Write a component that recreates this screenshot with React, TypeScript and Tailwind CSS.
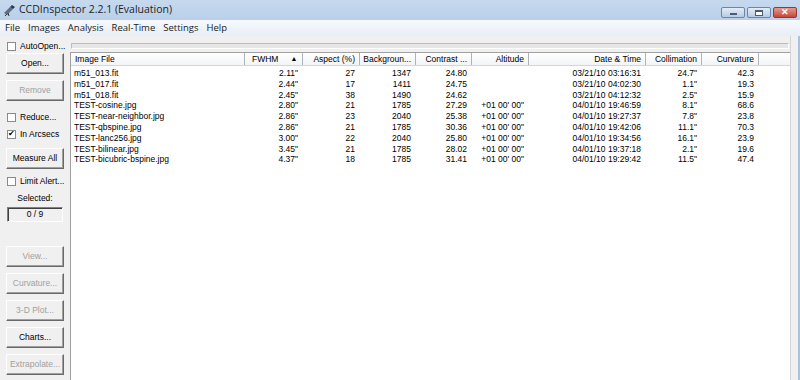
import React from 'react';

const rows = [
  ['m51_013.fit', '2.11"', '27', '1347', '24.80', '', '03/21/10 03:16:31', '24.7"', '42.3'],
  ['m51_017.fit', '2.44"', '17', '1411', '24.75', '', '03/21/10 04:02:30', '1.1"', '19.3'],
  ['m51_018.fit', '2.45"', '38', '1490', '24.62', '', '03/21/10 04:12:32', '2.5"', '15.9'],
  ['TEST-cosine.jpg', '2.80"', '21', '1785', '27.29', '+01 00\' 00"', '04/01/10 19:46:59', '8.1"', '68.6'],
  ['TEST-near-neighbor.jpg', '2.86"', '23', '2040', '25.38', '+01 00\' 00"', '04/01/10 19:27:37', '7.8"', '23.8'],
  ['TEST-qbspine.jpg', '2.86"', '21', '1785', '30.36', '+01 00\' 00"', '04/01/10 19:42:06', '11.1"', '70.3'],
  ['TEST-lanc256.jpg', '3.00"', '22', '2040', '25.80', '+01 00\' 00"', '04/01/10 19:34:56', '16.1"', '23.9'],
  ['TEST-bilinear.jpg', '3.45"', '21', '1785', '28.02', '+01 00\' 00"', '04/01/10 19:37:18', '2.1"', '19.6'],
  ['TEST-bicubric-bspine.jpg', '4.37"', '18', '1785', '31.41', '+01 00\' 00"', '04/01/10 19:29:42', '11.5"', '47.4'],
];

const cols = [
  { label: 'Image File', w: 'w-[174px]', align: 'left' },
  { label: 'FWHM', w: 'w-[58px]', align: 'right', sort: true },
  { label: 'Aspect (%)', w: 'w-[57px]', align: 'right' },
  { label: 'Backgroun...', w: 'w-[56px]', align: 'right' },
  { label: 'Contrast ...', w: 'w-[56px]', align: 'right' },
  { label: 'Altitude', w: 'w-[57px]', align: 'right' },
  { label: 'Date & Time', w: 'w-[117px]', align: 'right' },
  { label: 'Collimation', w: 'w-[56px]', align: 'right' },
  { label: 'Curvature', w: 'w-[57px]', align: 'right' },
];

function Btn({ label, disabled, className }: { label: string; disabled?: boolean; className?: string }) {
  return (
    <div
      className={`mx-[6px] h-[21px] shrink-0 flex items-center justify-center bg-[#f0f0f0] border border-t-white border-l-white border-r-[#696969] border-b-[#696969] shadow-[inset_-1px_-1px_0_#a0a0a0] text-[8.5px] ${
        disabled ? 'text-[#a0a0a0]' : 'text-black'
      } ${className ?? ''}`}
    >
      {label}
    </div>
  );
}

function Check({ label, checked, className }: { label: string; checked?: boolean; className?: string }) {
  return (
    <div className={`h-[10px] shrink-0 flex items-center gap-[4px] pl-[7px] text-[8.5px] leading-[10px] ${className ?? ''}`}>
      <div className="w-[9px] h-[9px] bg-white border border-[#8a8a8a] flex items-center justify-center text-[8px] leading-none">
        {checked ? '✔' : ''}
      </div>
      <span>{label}</span>
    </div>
  );
}

export default function App() {
  return (
    <div className="w-[800px] h-[380px] overflow-hidden flex flex-col bg-[#f0f0f0] text-black font-['Liberation_Sans',Arial,sans-serif]">
      {/* title bar */}
      <div className="h-[20px] shrink-0 flex items-center bg-gradient-to-b from-[#c6d9ee] to-[#b9d0e9] pl-[3px] pr-[3px]">
        <svg width="13" height="12" viewBox="0 0 13 12" className="mr-[3px]">
          <path d="M1 9 L7 3 L10 5 L4 11 Z" fill="#5b6f8a" />
          <path d="M7 3 L9 1 L12 3 L10 5 Z" fill="#2f3b4d" />
          <path d="M4 10 L2 12 M5 9 L6 12" stroke="#333" strokeWidth="1" />
        </svg>
        <span className="text-[10.5px] text-[#1e1e1e] font-['Open_Sans',sans-serif]">CCDInspector 2.2.1 (Evaluation)</span>
        <div className="ml-auto flex gap-[2px] self-start mt-[7px]">
          <div className="w-[24px] h-[11px] rounded-[2px] border border-[#6d86a8] bg-gradient-to-b from-[#e3ecf7] to-[#b8cbe3] flex items-center justify-center">
            <div className="w-[7px] h-[2px] bg-white border border-[#4a5d78] mt-[3px]" />
          </div>
          <div className="w-[24px] h-[11px] rounded-[2px] border border-[#6d86a8] bg-gradient-to-b from-[#e3ecf7] to-[#b8cbe3] flex items-center justify-center">
            <div className="w-[8px] h-[6px] bg-white border border-[#4a5d78] border-t-2" />
          </div>
          <div className="w-[24px] h-[11px] rounded-[2px] border border-[#8c3b3b] bg-gradient-to-b from-[#e49a8c] to-[#c4453a] flex items-center justify-center text-white text-[9px] font-bold leading-none">
            ✕
          </div>
        </div>
      </div>

      {/* menu bar */}
      <div className="h-[16px] shrink-0 flex items-center gap-[8px] pl-[5px] bg-gradient-to-b from-[#f7f9fc] to-[#e8eef6] text-[9.5px] font-['Open_Sans',sans-serif] text-[#1a1a1a]">
        <span>File</span>
        <span>Images</span>
        <span>Analysis</span>
        <span>Real-Time</span>
        <span>Settings</span>
        <span>Help</span>
      </div>

      <div className="flex flex-1 min-h-0">
        <div className="flex-1 flex flex-col min-w-0">
          {/* autoopen row */}
          <div className="h-[16px] shrink-0 flex items-center">
            <div className="w-[71px] pt-[4px]">
              <Check label="AutoOpen..." />
            </div>
            <div className="flex-1 h-[6px] mt-[3px] mr-[1px] bg-[#e6e6e6] border border-[#bcbcbc] border-b-white border-r-white" />
          </div>

          <div className="flex flex-1 min-h-0">
            {/* left panel */}
            <div className="w-[70px] shrink-0 flex flex-col pt-[1px]">
              <Btn label="Open..." />
              <Btn label="Remove" disabled className="mt-[6px]" />
              <Check label="Reduce..." className="mt-[11px]" />
              <Check label="In Arcsecs" checked className="mt-[7px]" />
              <Btn label="Measure All" className="mt-[9px]" />
              <Check label="Limit Alert..." className="mt-[7px]" />
              <div className="h-[10px] leading-[10px] text-center text-[8.5px] mt-[7px]">Selected:</div>
              <div className="mx-[7px] mt-[4px] h-[15px] shrink-0 flex items-center justify-center text-[8.5px] border border-t-[#808080] border-l-[#808080] border-r-white border-b-white shadow-[inset_1px_1px_0_#404040]">
                0 / 9
              </div>
              <Btn label="View..." disabled className="mt-[24px]" />
              <Btn label="Curvature..." disabled className="mt-[6px]" />
              <Btn label="3-D Plot..." disabled className="mt-[6px]" />
              <Btn label="Charts..." className="mt-[6px]" />
              <Btn label="Extrapolate..." disabled className="mt-[6px]" />
            </div>

            {/* list view */}
            <div className="flex-1 min-w-0 bg-white border-l border-t border-[#a0a0a0] text-[8.5px]">
              <div className="flex h-[13px] bg-gradient-to-b from-white to-[#f3f4f6] border-b border-[#d5d5d5]">
                {cols.map((c) => (
                  <div
                    key={c.label}
                    className={`${c.w} shrink-0 h-full flex items-center border-r border-[#aeb3b9] px-[4px] whitespace-nowrap overflow-hidden ${
                      c.align === 'left' ? 'justify-start' : 'justify-end'
                    } ${c.sort ? 'justify-start pl-[7px]' : ''}`}
                  >
                    {c.label}
                    {c.sort && <span className="ml-[12px] text-[7px]">▲</span>}
                  </div>
                ))}
              </div>
              <div className="pt-[2px]">
                {rows.map((r, i) => (
                  <div key={i} className="flex h-[10.8px] leading-[10.8px]">
                    {r.map((v, j) => (
                      <div
                        key={j}
                        className={`${cols[j].w} shrink-0 whitespace-nowrap overflow-hidden ${
                          j === 0 ? 'text-left pl-[3px]' : 'text-right pr-[5px]'
                        } ${j === 5 ? 'text-left pl-[1px] pr-0' : ''}`}
                      >
                        {v}
                      </div>
                    ))}
                  </div>
                ))}
              </div>
            </div>
          </div>
        </div>

        {/* window right frame */}
        <div className="w-[10px] shrink-0 border-l border-[#d4d4d4] bg-[#f0f0f0] flex justify-end">
          <div className="w-[2px] bg-[#a9c3df]" />
        </div>
      </div>
    </div>
  );
}
